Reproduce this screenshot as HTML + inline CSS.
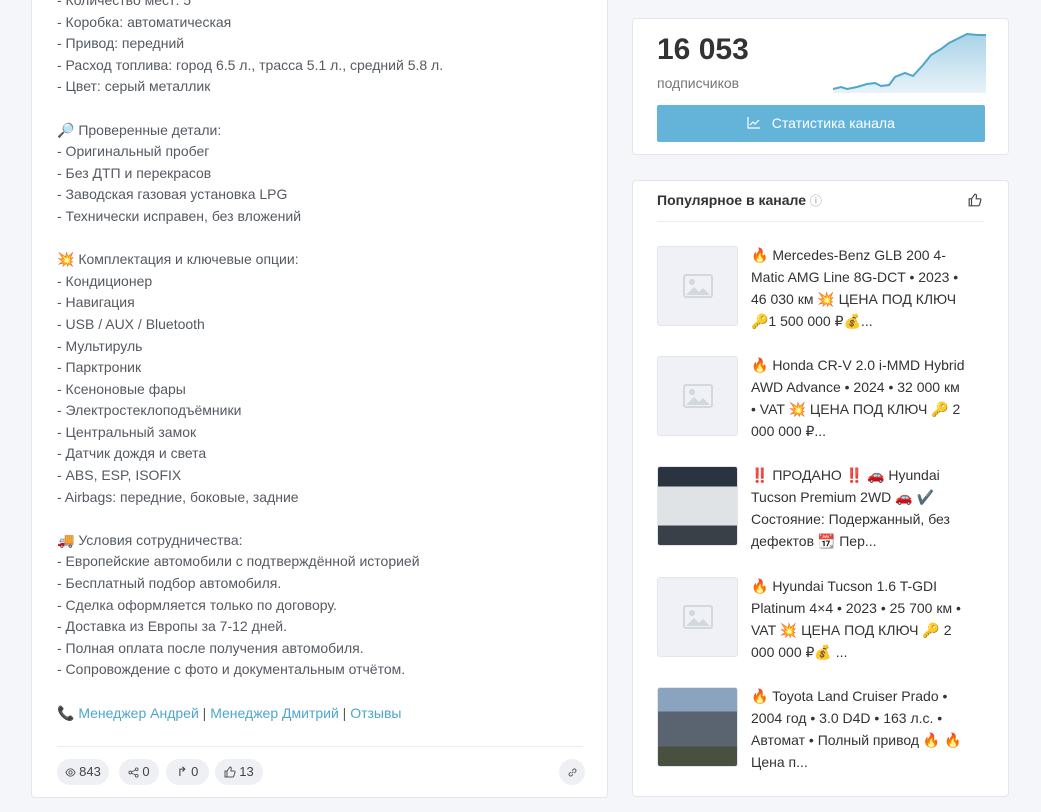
<!DOCTYPE html>
<html><head><meta charset="utf-8"><style>
*{box-sizing:border-box;margin:0;padding:0}
body{width:1041px;height:812px;overflow:hidden;background:#f4f6f9;font-family:"Liberation Sans","Noto Sans CJK SC",sans-serif;position:relative}
.card{position:absolute;background:#fff;border:1px solid #e3e6ea;border-radius:4px}
.post{left:31px;top:-20px;width:577px;height:818px}
.body{position:absolute;left:25px;top:9px;font-size:14px;line-height:21.6px;color:#555a61;white-space:pre}
.body a{color:#4ea6cc;text-decoration:none}
.hr{position:absolute;left:25px;right:24px;height:1px;background:#eceef1}
.pill{position:absolute;top:778px;height:26px;border-radius:13px;background:#eef0f3;font-size:13px;color:#444;line-height:26px;display:flex;align-items:center;justify-content:center;gap:3px}
.item{position:absolute;left:24px;width:330px;height:81px}
.thumb{position:absolute;left:0;top:0;width:81px;height:80px;background:#eff1f6;border:1px solid #e2e5ea;border-radius:3px;display:flex;align-items:center;justify-content:center}
.itxt{position:absolute;left:94px;top:-2px;width:240px;font-size:14px;line-height:22px;color:#333;white-space:nowrap}
</style></head><body>
<div class="card post">
<div class="body">- Количество мест: 5
- Коробка: автоматическая
- Привод: передний
- Расход топлива: город 6.5 л., трасса 5.1 л., средний 5.8 л.
- Цвет: серый металлик

🔎 Проверенные детали:
- Оригинальный пробег
- Без ДТП и перекрасов
- Заводская газовая установка LPG
- Технически исправен, без вложений

💥 Комплектация и ключевые опции:
- Кондиционер
- Навигация
- USB / AUX / Bluetooth
- Мультируль
- Парктроник
- Ксеноновые фары
- Электростеклоподъёмники
- Центральный замок
- Датчик дождя и света
- ABS, ESP, ISOFIX
- Airbags: передние, боковые, задние

🚚 Условия сотрудничества:
- Европейские автомобили с подтверждённой историей
- Бесплатный подбор автомобиля.
- Сделка оформляется только по договору.
- Доставка из Европы за 7-12 дней.
- Полная оплата после получения автомобиля.
- Сопровождение с фото и документальным отчётом.

📞 <a>Менеджер Андрей</a> | <a>Менеджер Дмитрий</a> | <a>Отзывы</a></div>
<div class="hr" style="top:765px"></div>
<div class="pill" style="left:25px;width:52px"><svg width="11" height="11" viewBox="0 0 12 12" fill="none" stroke="#555" stroke-width="1"><path d="M1 6c1.5-3 3-4 5-4s3.5 1 5 4c-1.5 3-3 4-5 4S2.5 9 1 6z"/><circle cx="6" cy="6" r="1.8"/></svg>843</div>
<div class="pill" style="left:87px;width:40px"><svg width="11" height="11" viewBox="0 0 12 12" fill="none" stroke="#555" stroke-width="1"><circle cx="2.5" cy="6" r="1.5"/><circle cx="9.5" cy="2.5" r="1.5"/><circle cx="9.5" cy="9.5" r="1.5"/><path d="M4 5.3l4-2M4 6.7l4 2"/></svg>0</div>
<div class="pill" style="left:134px;width:43px">↱ 0</div>
<div class="pill" style="left:183px;width:48px"><svg width="12" height="12" viewBox="0 0 12 12" fill="none" stroke="#555" stroke-width="1"><path d="M1 5h2v6H1zM3 5l3-4c1 0 1.5.5 1.2 2L7 5h3.2c.7 0 1 .6.8 1.2l-1.2 4c-.2.5-.5.8-1 .8H3"/></svg>13</div>
<div class="pill" style="left:527px;width:26px"><svg width="11" height="11" viewBox="0 0 12 12" fill="none" stroke="#666" stroke-width="1.1"><path d="M5 7l2-2M4 5.5L2.5 7a1.8 1.8 0 002.5 2.5L6.5 8M8 6.5L9.5 5A1.8 1.8 0 007 2.5L5.5 4"/></svg></div>
</div>

<div class="card" style="left:632px;top:18px;width:377px;height:137px">
<div style="position:absolute;left:24px;top:14px;font-size:30px;font-weight:bold;color:#333">16 053</div>
<div style="position:absolute;left:24px;top:56px;font-size:14px;color:#777">подписчиков</div>
<svg style="position:absolute;left:200px;top:14px" width="153" height="60" viewBox="0 0 153 60">
<defs><linearGradient id="g" x1="0" y1="0" x2="0" y2="1"><stop offset="0" stop-color="#a9d3e8"/><stop offset="1" stop-color="#e8f3f9"/></linearGradient></defs>
<path d="M0 56 L8 54 L14 56 L24 54 L34 51 L42 50 L48 53 L56 52 L62 44 L72 40 L80 43 L90 32 L98 22 L108 16 L116 10 L126 5 L134 1 L145 2 L153 2 L153 60 L0 60Z" fill="url(#g)"/>
<path d="M0 56 L8 54 L14 56 L24 54 L34 51 L42 50 L48 53 L56 52 L62 44 L72 40 L80 43 L90 32 L98 22 L108 16 L116 10 L126 5 L134 1 L145 2 L153 2" fill="none" stroke="#4ea6cc" stroke-width="2"/>
</svg>
<div style="position:absolute;left:24px;top:86px;width:328px;height:37px;background:#63b4d8;border-radius:2px;color:#fff;font-size:14px;line-height:37px;text-align:center"><svg width="13" height="12" viewBox="0 0 13 12" fill="none" stroke="#fff" stroke-width="1.2" style="vertical-align:-1px"><path d="M1 0v11h12M3 8l3-3 2 2 4-4"/></svg> &nbsp; Статистика канала</div>
</div>

<div class="card" style="left:632px;top:180px;width:377px;height:617px">
<div style="position:absolute;left:24px;top:11px;font-size:14px;font-weight:bold;color:#333">Популярное в канале <span style="font-weight:normal;color:#999;font-size:12px">ⓘ</span></div>
<div style="position:absolute;right:26px;top:12px"><svg width="14" height="14" viewBox="0 0 12 12" fill="none" stroke="#444" stroke-width="1"><path d="M1 5h2v6H1zM3 5l3-4c1 0 1.5.5 1.2 2L7 5h3.2c.7 0 1 .6.8 1.2l-1.2 4c-.2.5-.5.8-1 .8H3"/></svg></div>
<div class="hr" style="top:40px;left:24px;right:24px"></div>
<div class="item" style="top:65px"><div class="thumb"><svg width="30" height="24" viewBox="0 0 30 24"><rect x="1" y="1" width="28" height="22" rx="2" fill="none" stroke="#d3d7de" stroke-width="2"/><circle cx="9" cy="8" r="3" fill="#d3d7de"/><path d="M3 21l8-8 5 5 4-4 7 7z" fill="#d3d7de"/></svg></div><div class="itxt">🔥 Mercedes-Benz GLB 200 4-<br>Matic AMG Line 8G-DCT • 2023 •<br>46 030 км 💥 ЦЕНА ПОД КЛЮЧ<br>🔑1 500 000 ₽💰...</div></div>
<div class="item" style="top:175px"><div class="thumb"><svg width="30" height="24" viewBox="0 0 30 24"><rect x="1" y="1" width="28" height="22" rx="2" fill="none" stroke="#d3d7de" stroke-width="2"/><circle cx="9" cy="8" r="3" fill="#d3d7de"/><path d="M3 21l8-8 5 5 4-4 7 7z" fill="#d3d7de"/></svg></div><div class="itxt">🔥 Honda CR-V 2.0 i-MMD Hybrid<br>AWD Advance • 2024 • 32 000 км<br>• VAT 💥 ЦЕНА ПОД КЛЮЧ 🔑 2<br>000 000 ₽...</div></div>
<div class="item" style="top:285px"><div class="thumb" style="background:linear-gradient(#2a3440 0 25%,#dfe3e6 25% 75%,#3a4048 75%)"></div><div class="itxt">‼️ ПРОДАНО ‼️ 🚗 Hyundai<br>Tucson Premium 2WD 🚗 ✔️<br>Состояние: Подержанный, без<br>дефектов 📆 Пер...</div></div>
<div class="item" style="top:396px"><div class="thumb"><svg width="30" height="24" viewBox="0 0 30 24"><rect x="1" y="1" width="28" height="22" rx="2" fill="none" stroke="#d3d7de" stroke-width="2"/><circle cx="9" cy="8" r="3" fill="#d3d7de"/><path d="M3 21l8-8 5 5 4-4 7 7z" fill="#d3d7de"/></svg></div><div class="itxt">🔥 Hyundai Tucson 1.6 T-GDI<br>Platinum 4×4 • 2023 • 25 700 км •<br>VAT 💥 ЦЕНА ПОД КЛЮЧ 🔑 2<br>000 000 ₽💰 ...</div></div>
<div class="item" style="top:506px"><div class="thumb" style="background:linear-gradient(#8aa3bf 0 30%,#5a6470 30% 75%,#4a5040 75%)"></div><div class="itxt">🔥 Toyota Land Cruiser Prado •<br>2004 год • 3.0 D4D • 163 л.с. •<br>Автомат • Полный привод 🔥 🔥<br>Цена п...</div></div>
</div>
</body></html>
